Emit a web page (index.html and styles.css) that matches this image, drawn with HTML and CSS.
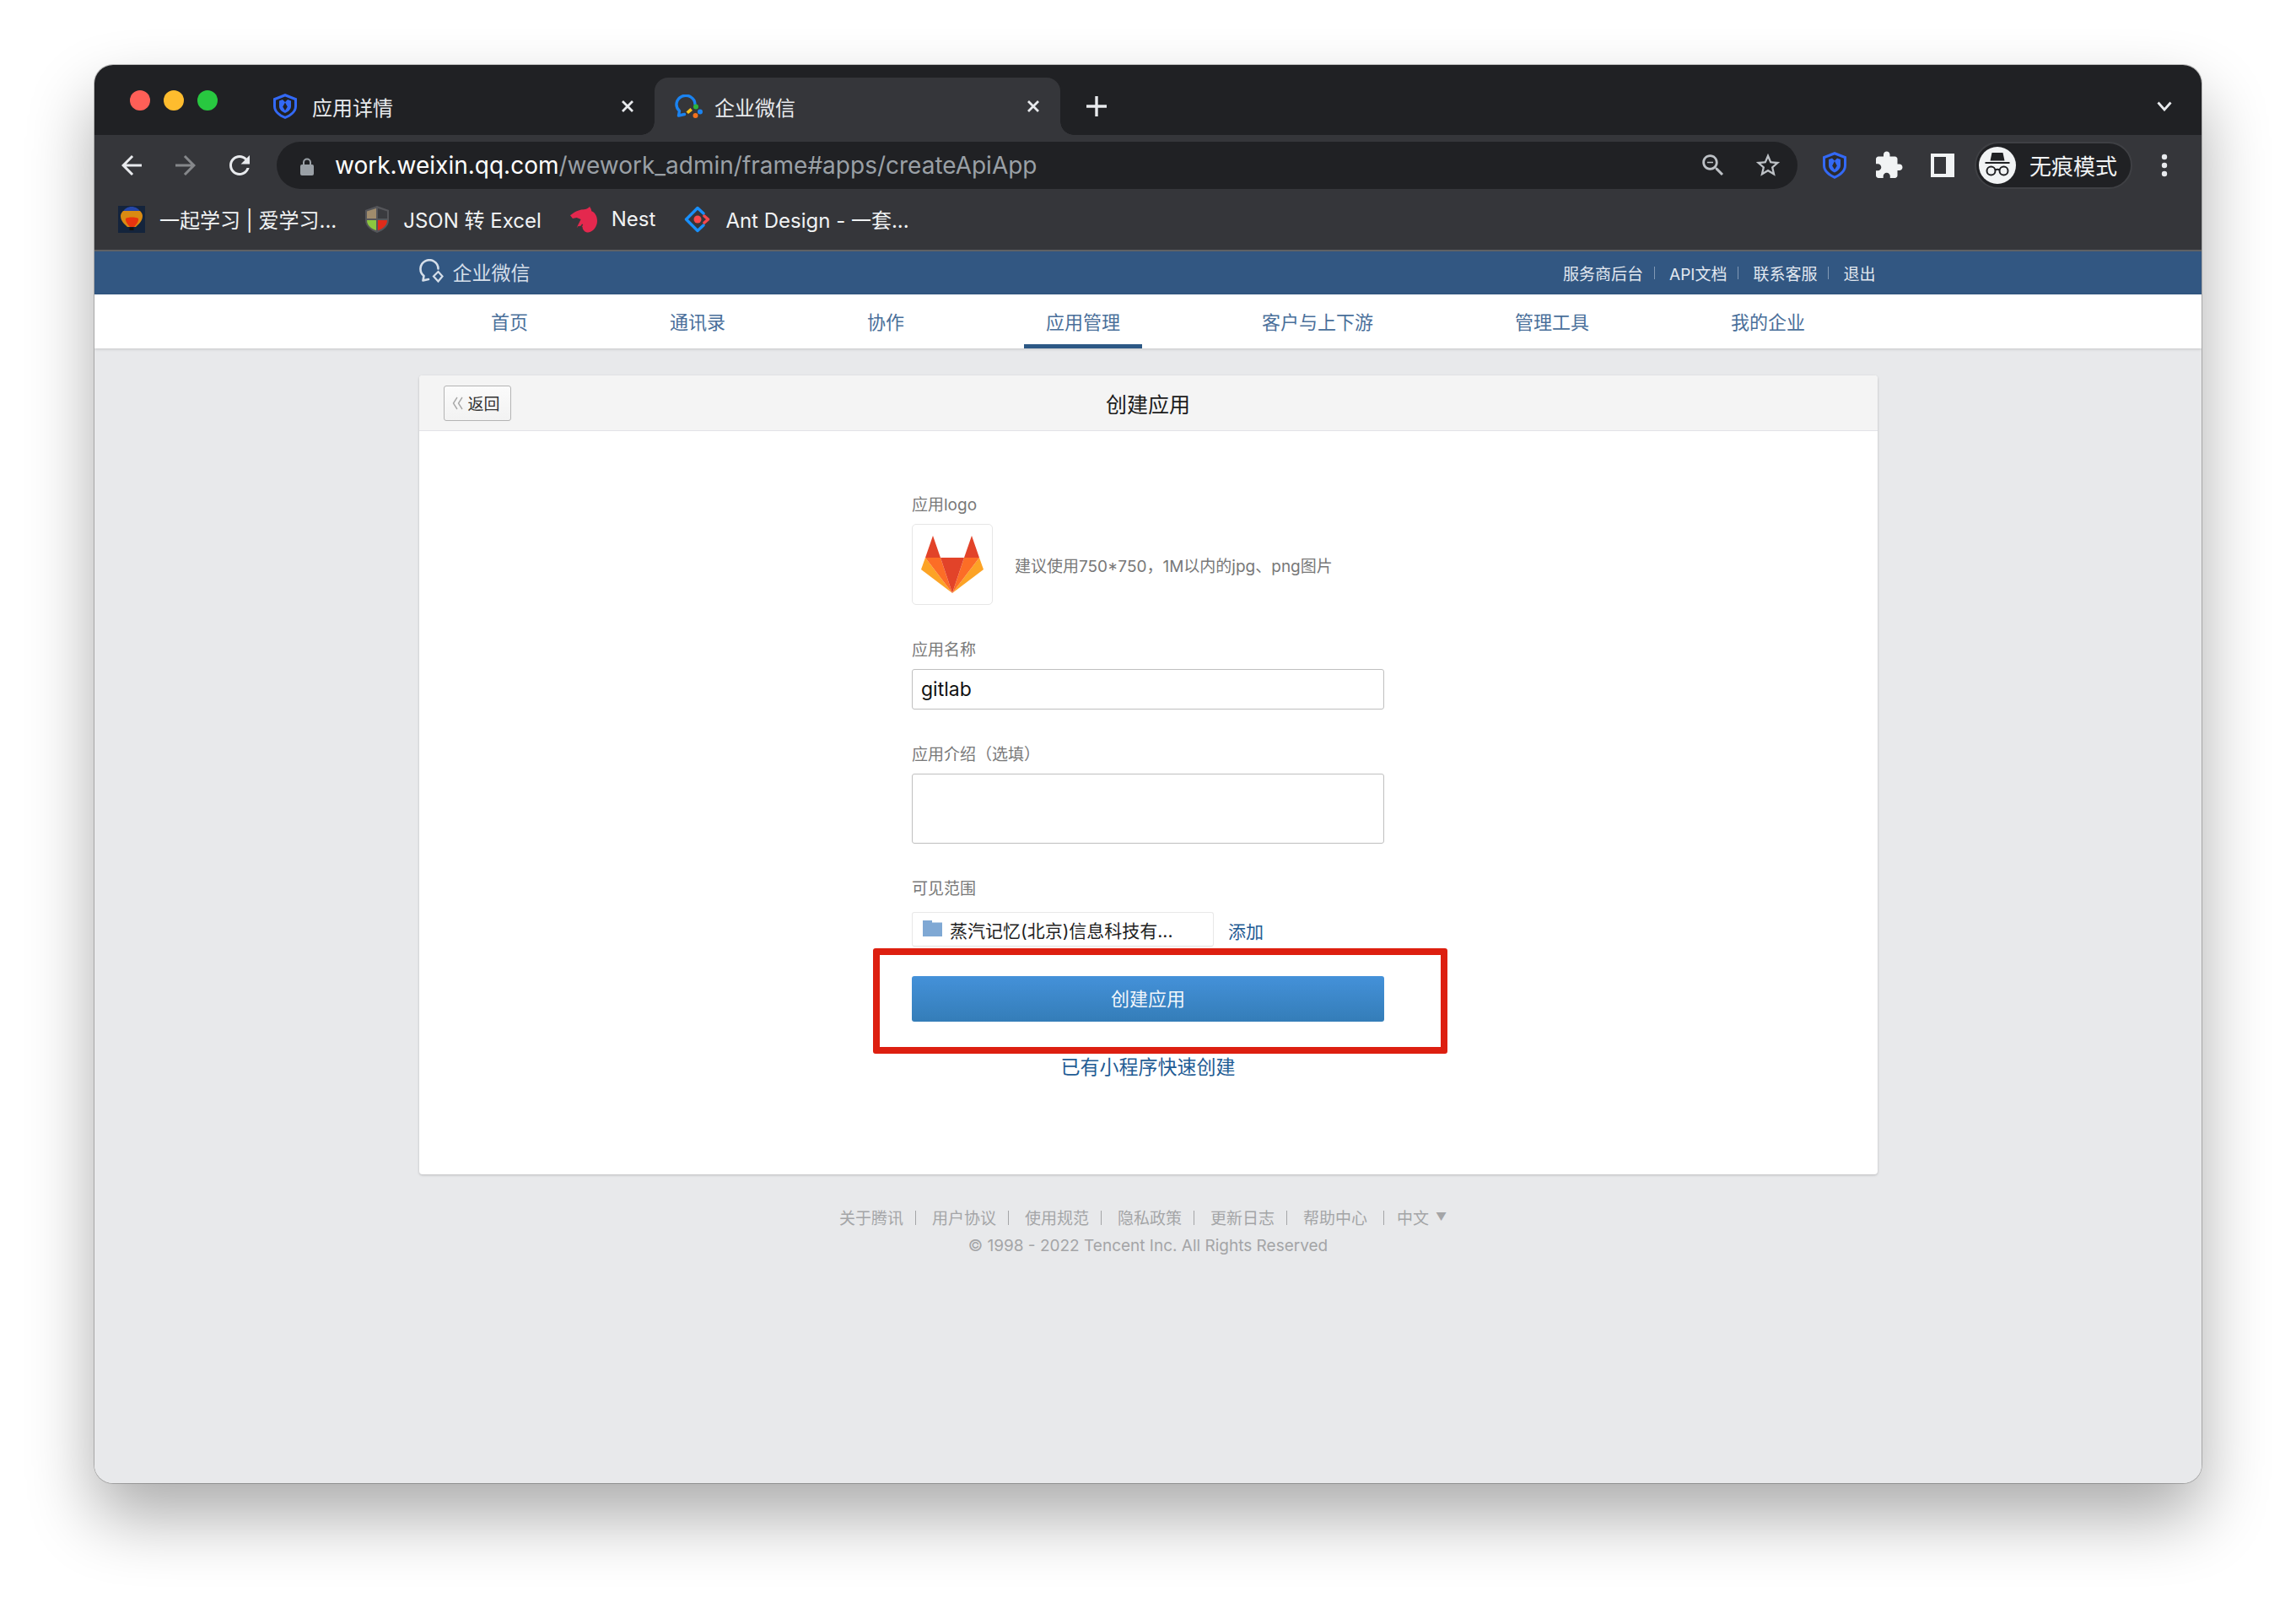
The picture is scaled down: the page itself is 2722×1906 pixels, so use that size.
FILE: index.html
```html
<!DOCTYPE html>
<html lang="zh-CN">
<head>
<meta charset="utf-8">
<title>企业微信</title>
<link rel="stylesheet" href="styles.css">
</head>
<body>
<div class="window">
  <div class="tabstrip">
    <div class="lights"><i class="light red"></i><i class="light amber"></i><i class="light green"></i></div>
    <div class="tab tab-first">
      <svg class="fav-shield" viewBox="0 0 28 30"><path fill="#3369f5" d="M14 0 28 5.5V15c0 7-6.500 12-14 15C6.500 27 0 22 0 15V5.500Z"/><path fill="#202124" d="M14 3.500 25 7.800V15c0 5.300-4.800 9.300-11 11.800C7.800 24.300 3 20.300 3 15V7.800Z"/><path fill="#3369f5" d="M7 8.500 11 7l3 3 3-3 4 1.500V15c0 3.500-3 6.300-7 8-4-1.700-7-4.500-7-8Z"/><path fill="#202124" d="m14 10.500 2.800 5L14 20l-2.800-4.500Z"/></svg>
      <span class="tab-title">应用详情</span>
      <svg class="tab-close" viewBox="0 0 16 16"><path d="m2 2 12 12M14 2 2 14"/></svg>
    </div>
    <div class="tab tab-active">
      <svg class="fav-wecom" viewBox="0 0 33 28"><path fill="none" stroke="#1b83f0" stroke-width="3.400" stroke-linejoin="round" stroke-linecap="round" d="M24 11.500A11 10.500 0 1 0 5.500 19.500L4.500 25 11.500 23.500"/><path fill="#fbc21a" d="m13.500 20.500 5-4.500 2.500 3-5 4Z"/><circle cx="25" cy="14.500" r="3" fill="#2cb53a"/><circle cx="30" cy="20.500" r="3" fill="#1b83f0"/><circle cx="24.500" cy="25" r="3" fill="#f4711c"/></svg>
      <span class="tab-title">企业微信</span>
      <svg class="tab-close" viewBox="0 0 16 16"><path d="m2 2 12 12M14 2 2 14"/></svg>
    </div>
    <svg class="new-tab" viewBox="0 0 26 26"><path d="M13 1v24M1 13h24"/></svg>
    <svg class="tabs-menu" viewBox="0 0 18 12"><path d="m1.500 1.500 7.500 8.500 7.500-8.500"/></svg>
  </div>

  <div class="toolbar">
    <svg class="tool-icon" viewBox="0 0 24 24"><path fill="#e8eaed" d="M20 11H7.830l5.590-5.590L12 4l-8 8 8 8 1.410-1.410L7.830 13H20v-2z"/></svg>
    <svg class="tool-icon" viewBox="0 0 24 24"><path fill="#85878a" d="M4 11h12.170l-5.590-5.590L12 4l8 8-8 8-1.410-1.410L16.170 13H4v-2z"/></svg>
    <svg class="tool-icon" viewBox="0 0 24 24"><path fill="#e8eaed" d="M17.650 6.350C16.200 4.900 14.210 4 12 4c-4.420 0-7.990 3.580-7.990 8s3.570 8 7.990 8c3.730 0 6.840-2.550 7.730-6h-2.080c-.82 2.330-3.040 4-5.650 4-3.310 0-6-2.690-6-6s2.690-6 6-6c1.660 0 3.140.69 4.220 1.780L13 11h7V4l-2.350 2.350z"/></svg>
    <div class="omnibox">
      <svg class="lock" viewBox="0 0 16 21"><path fill="#9aa0a6" d="M3 8V5.500a5 5 0 0 1 10 0V8h1a2 2 0 0 1 2 2v9a2 2 0 0 1-2 2H2a2 2 0 0 1-2-2v-9a2 2 0 0 1 2-2Zm2 0h6V5.500a3 3 0 0 0-6 0Z"/></svg>
      <div class="url"><span class="url-host">work.weixin.qq.com</span>/wework_admin/frame#apps/createApiApp</div>
      <svg class="omni-icon" viewBox="0 0 24 24"><path fill="#bdc1c6" d="M15.500 14h-.79l-.28-.27C15.410 12.590 16 11.110 16 9.500 16 5.910 13.090 3 9.500 3S3 5.910 3 9.500 5.910 16 9.500 16c1.610 0 3.090-.59 4.230-1.570l.27.28v.79l5 4.990L20.490 19l-4.990-5zm-6 0C7.010 14 5 11.990 5 9.500S7.010 5 9.500 5 14 7.010 14 9.500 11.990 14 9.500 14zM7 9h5v1H7z"/></svg>
      <svg class="omni-icon" viewBox="0 0 24 24"><path fill="#bdc1c6" d="m22 9.240-7.190-.62L12 2 9.190 8.630 2 9.240l5.460 4.730L5.820 21 12 17.270 18.180 21l-1.630-7.030L22 9.240zM12 15.400l-3.760 2.270 1-4.280-3.320-2.880 4.380-.38L12 6.100l1.710 4.040 4.380.38-3.320 2.880 1 4.280L12 15.400z"/></svg>
    </div>
    <div class="tool-box"><svg class="ext-shield" viewBox="0 0 28 32"><path fill="#3369f5" d="M14 0 28 5.500V16c0 7.500-6.500 12.500-14 16C6.500 28.500 0 23.500 0 16V5.500Z"/><path fill="#2a2b2f" d="M14 3.500 25 7.800V16c0 5.700-4.800 9.800-11 12.500C7.800 25.800 3 21.700 3 16V7.800Z"/><path fill="#3369f5" d="M7 9 11 7.500l3 3 3-3L21 9v7c0 3.700-3 6.800-7 8.500-4-1.700-7-4.800-7-8.500Z"/><path fill="#2a2b2f" d="m14 11 2.800 5.500L14 21l-2.800-4.500Z"/></svg></div>
    <svg class="tool-icon" viewBox="0 0 24 24"><path fill="#f1f3f4" d="M20.500 11H19V7c0-1.100-.9-2-2-2h-4V3.500C13 2.120 11.880 1 10.500 1S8 2.120 8 3.500V5H4c-1.100 0-1.990.9-1.990 2v3.800H3.500c1.490 0 2.700 1.210 2.700 2.700s-1.210 2.700-2.700 2.700H2V20c0 1.100.9 2 2 2h3.800v-1.500c0-1.490 1.210-2.700 2.700-2.700 1.490 0 2.700 1.210 2.700 2.700V22H17c1.100 0 2-.9 2-2v-4h1.500c1.380 0 2.500-1.120 2.500-2.500S21.880 11 20.500 11z"/></svg>
    <div class="tool-box"><svg class="panel" viewBox="0 0 28 28"><path fill="#f1f3f4" d="M0 0h28v28H0Z"/><path fill="#35363a" d="M4 4h14v20H4Z"/></svg></div>
    <div class="profile">
      <svg class="avatar" viewBox="0 0 44 44"><circle cx="22" cy="22" r="22" fill="#f1f3f4"/><path fill="#202124" d="M15.500 7h13l2 9.500h-17Z"/><path stroke="#202124" stroke-width="2" d="M7.500 19h29"/><g fill="none" stroke="#202124" stroke-width="2"><circle cx="14.500" cy="28.500" r="5"/><circle cx="29.500" cy="28.500" r="5"/><path d="M19 27.500c2-1 4-1 6 0"/></g></svg>
      <span class="profile-name">无痕模式</span>
    </div>
    <svg class="kebab" viewBox="0 0 8 28"><circle cx="4" cy="4" r="3.200"/><circle cx="4" cy="14" r="3.200"/><circle cx="4" cy="24" r="3.200"/></svg>
  </div>

  <div class="bookmarks">
    <div class="bookmark">
      <svg class="bm-icon" viewBox="0 0 32 32"><path fill="#14243c" d="M0 0h32v32H0Z"/><path fill="#2647a8" d="M5 10C6 3 12 1 16 1s10 2 11 9Z"/><path fill="#d98a12" d="M3 12c0-3 2-5 3-6h20c1 1 3 3 3 6 0 6-5 10-8 13h-10C8 22 3 18 3 12Z"/><path fill="#e8340f" d="M9 15c3-2 12-2 15 0 1 3-3 8-5 10h-5c-2-2-6-7-5-10Z"/><path fill="#1a1208" d="M13.500 25.500h5V29h-5Z"/></svg>
      <span>一起学习 | 爱学习...</span>
    </div>
    <div class="bookmark">
      <svg class="bm-icon-narrow" viewBox="0 0 28 32"><path fill="#55565a" d="M14 0 28 5v12c0 7-6 12-14 15C6 29 0 24 0 17V5Z"/><path fill="#a08c6c" d="M13 3 2 6.500V15h11Z"/><path fill="#3a3b3f" d="m15 3 11 3.500V15H15Z"/><path fill="#8cc63f" d="M2 17h11v12c-6-2-11-6-11-12Z"/><path fill="#e02b1a" d="M15 17h11c0 6-5 10-11 12Z"/></svg>
      <span>JSON 转 Excel</span>
    </div>
    <div class="bookmark">
      <svg class="bm-icon" viewBox="0 0 33 32"><path fill="#e4284e" d="M24 0c-1 2-3 3-7 4C12 4 8 6 5 7.500L0 11l3 4 5-1 5 2-3 6-2 4 4-2 3 1c0 4 3 7 7 7 6-1 11-7 11-14 0-6-3-11-7-12 0-2-1-4-2-5Z"/><path fill="none" stroke="#35363a" stroke-width="1.400" d="M9 25c3 1 5 0 6-3"/></svg>
      <span>Nest</span>
    </div>
    <div class="bookmark">
      <svg class="bm-icon" viewBox="0 0 32 32"><g fill="none" stroke-width="3.400" stroke-linecap="round" stroke-linejoin="round"><path stroke="#1890ff" d="M23 9 16 2.500 2.500 16 16 29.500 23 23"/><path stroke="#f5484d" d="m24 12 4.500 4-4.500 4"/></g><circle cx="16" cy="16" r="4.500" fill="#f5484d"/></svg>
      <span>Ant Design - 一套...</span>
    </div>
  </div>

  <div class="page">
    <div class="topbar">
      <div class="topbar-inner">
        <div class="brand">
          <svg class="brand-logo" viewBox="0 0 30 30"><path fill="none" stroke="#d5dee9" stroke-width="2.600" stroke-linejoin="round" stroke-linecap="round" d="M22.500 11.500A10.500 10.500 0 1 0 5.500 20L4.500 25.500 11 24"/><path fill="none" stroke="#d5dee9" stroke-width="2.200" d="m22.500 15 5 5.500-5 6-5.500-6Z"/></svg>
          <span>企业微信</span>
        </div>
        <div class="top-links">
          <a>服务商后台</a><i class="top-sep"></i><a>API文档</a><i class="top-sep"></i><a>联系客服</a><i class="top-sep"></i><a>退出</a>
        </div>
      </div>
    </div>
    <nav class="mainnav">
      <a class="nav-item">首页</a>
      <a class="nav-item">通讯录</a>
      <a class="nav-item">协作</a>
      <a class="nav-item nav-active">应用管理</a>
      <a class="nav-item">客户与上下游</a>
      <a class="nav-item">管理工具</a>
      <a class="nav-item">我的企业</a>
    </nav>

    <section class="card">
      <header class="card-head">
        <a class="back"><svg class="back-icon" viewBox="0 0 14 16"><path d="M6 1 1.500 8 6 15M12 1 7.500 8l4.500 7"/></svg>返回</a>
        <h1 class="card-title">创建应用</h1>
      </header>
      <form class="form">
        <div class="label label-first">应用logo</div>
        <div class="logo-row">
          <div class="logo-box">
            <svg class="tanuki" viewBox="0 0 74 68"><path fill="#fca326" d="M0 40 5 26 37 68Z"/><path fill="#fca326" d="M74 40 69 26 37 68Z"/><path fill="#fc6d26" d="M5 26h18l14 42Z"/><path fill="#fc6d26" d="M69 26H51L37 68Z"/><path fill="#e24329" d="M23 26h28L37 68Z"/><path fill="#e24329" d="M14 0 5 26h18Z"/><path fill="#e24329" d="M60 0 51 26h18Z"/></svg>
          </div>
          <span class="hint">建议使用750*750，1M以内的jpg、png图片</span>
        </div>
        <div class="label label-gap">应用名称</div>
        <div class="input">gitlab</div>
        <div class="label label-gap">应用介绍（选填）</div>
        <div class="textarea"></div>
        <div class="label label-gap">可见范围</div>
        <div class="scope-row">
          <div class="chip">
            <svg class="folder" viewBox="0 0 23 19"><path fill="#7fa8d4" d="M0 0h11v2.500h12V19H0Z"/></svg>
            <span>蒸汽记忆(北京)信息科技有...</span>
          </div>
          <a class="add">添加</a>
        </div>
        <div class="cta">
          <div class="submit">创建应用</div>
          <div class="highlight"></div>
        </div>
        <a class="quick">已有小程序快速创建</a>
      </form>
    </section>

    <footer class="footer">
      <div class="foot-links">
        <a>关于腾讯</a><i class="foot-sep"></i><a>用户协议</a><i class="foot-sep"></i><a>使用规范</a><i class="foot-sep"></i><a>隐私政策</a><i class="foot-sep"></i><a>更新日志</a><i class="foot-sep"></i><a>帮助中心</a><i class="foot-sep foot-sep-last"></i><a>中文</a><b class="caret">▼</b>
      </div>
      <div class="copyright">© 1998 - 2022 Tencent Inc. All Rights Reserved</div>
    </footer>
  </div>
</div>
</body>
</html>
```

FILE: styles.css
```css
* { box-sizing: border-box; }
html, body { margin: 0; height: 100%; }
body {
  background: #fff;
  overflow: hidden;
  font-family: Inter, "Noto Sans CJK SC", sans-serif;
  padding: 77px 0 0 112px;
}
a { color: inherit; text-decoration: none; }
svg { display: block; flex: none; }

.window {
  width: 2498px;
  height: 1681px;
  border-radius: 22px;
  overflow: hidden;
  display: flex;
  flex-direction: column;
  box-shadow: 0 40px 80px rgba(0, 0, 0, .33), 0 0 0 1px rgba(0, 0, 0, .22);
}

/* tab strip */
.tabstrip {
  height: 83px;
  flex: none;
  background: #202124;
  display: flex;
  align-items: flex-end;
  padding-left: 42px;
  color: #e8eaed;
}
.lights { display: flex; gap: 16px; align-self: flex-start; margin-top: 30px; }
.light { width: 24px; height: 24px; border-radius: 50%; }
.red { background: #ff5f57; }
.amber { background: #febc2e; }
.green { background: #28c840; }
.tab {
  height: 68px;
  display: flex;
  align-items: center;
  font-size: 24px;
  padding-right: 24px;
  position: relative;
}
.tab-first { width: 481px; margin-left: 37px; padding-left: 29px; }
.tab-active {
  width: 481px;
  padding-left: 24px;
  background: #35363a;
  border-radius: 16px 16px 0 0;
}
.tab-active::before,
.tab-active::after {
  content: "";
  position: absolute;
  bottom: 0;
  width: 16px;
  height: 16px;
}
.tab-active::before { left: -16px; background: radial-gradient(circle at 0 0, #202124 15.500px, #35363a 16px); }
.tab-active::after { right: -16px; background: radial-gradient(circle at 100% 0, #202124 15.500px, #35363a 16px); }
.fav-shield { width: 28px; height: 30px; margin-right: 18px; }
.fav-wecom { width: 33px; height: 28px; margin-right: 14px; }
.tab-title { white-space: nowrap; }
.tab-close { width: 16px; height: 16px; margin-left: auto; fill: none; stroke: #e8eaed; stroke-width: 2.800; }
.new-tab { width: 26px; height: 26px; margin: 0 0 21px 30px; fill: none; stroke: #e8eaed; stroke-width: 3.400; }
.tabs-menu { width: 18px; height: 12px; margin: 0 35px 28px auto; fill: none; stroke: #e8eaed; stroke-width: 2.800; }

/* toolbar */
.toolbar {
  height: 71px;
  flex: none;
  background: #35363a;
  display: flex;
  align-items: center;
  gap: 24px;
  padding-left: 24px;
}
.tool-icon { width: 40px; height: 40px; padding: 2px; }
.tool-box { width: 40px; height: 40px; display: flex; align-items: center; justify-content: center; }
.omnibox {
  width: 1803px;
  height: 56px;
  border-radius: 28px;
  background: #202124;
  display: flex;
  align-items: center;
  padding: 0 18px 0 28px;
  flex: none;
}
.lock { width: 16px; height: 21px; margin: 3px 25px 0 0; }
.url { font-size: 28px; color: #9aa0a6; flex: 1; white-space: nowrap; }
.url-host { color: #fff; }
.omni-icon { width: 34px; height: 34px; margin-left: 31px; }
.ext-shield { width: 28px; height: 32px; }
.panel { width: 28px; height: 28px; }
.profile {
  width: 187px;
  height: 56px;
  margin-left: -6px;
  flex: none;
  border: 2px solid #3f4044;
  border-radius: 28px;
  background: #202124;
  display: flex;
  align-items: center;
  padding-left: 3px;
  gap: 16px;
  color: #f1f3f4;
}
.avatar { width: 44px; height: 44px; }
.profile-name { font-size: 26px; white-space: nowrap; }
.kebab { width: 8px; height: 28px; margin-left: 10px; fill: #e8eaed; }

/* bookmarks */
.bookmarks {
  height: 67px;
  flex: none;
  background: #35363a;
  border-bottom: 2px solid #5f6164;
  padding: 0 0 8px 28px;
  display: flex;
  align-items: center;
  gap: 34px;
  color: #f1f3f4;
  font-size: 24px;
  white-space: nowrap;
}
.bookmark { display: flex; align-items: center; gap: 17px; }
.bm-icon { width: 32px; height: 32px; }
.bm-icon-narrow { width: 28px; height: 32px; }

/* page */
.page {
  flex: 1;
  background: #e8e9eb;
  display: flex;
  flex-direction: column;
  align-items: center;
}
.topbar { width: 100%; height: 51px; flex: none; background: #325782; }
.topbar-inner {
  width: 1729px;
  height: 100%;
  margin: 0 auto;
  display: flex;
  align-items: center;
  justify-content: space-between;
}
.brand { display: flex; align-items: center; gap: 10px; font-size: 23px; color: #d5dee9; margin-top: -3px; }
.brand-logo { width: 30px; height: 30px; }
.top-links { display: flex; align-items: center; font-size: 19px; color: #e2e8f0; padding-right: 2px; }
.top-sep { width: 1px; height: 15px; background: #8199b5; margin: 0 17px 0 13px; }

.mainnav {
  width: 100%;
  height: 64px;
  flex: none;
  background: #fff;
  display: flex;
  justify-content: center;
  gap: 116px;
  box-shadow: 0 1px 3px rgba(0, 0, 0, .16);
  font-size: 22px;
  color: #4a6f9a;
}
.nav-item {
  padding: 0 26px;
  height: 64px;
  line-height: 52px;
  padding-top: 7px;
  border-bottom: 5px solid transparent;
}
.nav-active { border-bottom-color: #2c5885; }

/* card */
.card {
  width: 1729px;
  height: 947px;
  flex: none;
  margin-top: 32px;
  background: #fff;
  border-radius: 4px;
  box-shadow: 0 1px 3px rgba(0, 0, 0, .2);
}
.card-head {
  height: 66px;
  background: #f4f4f4;
  border-bottom: 1px solid #e2e2e8;
  border-radius: 4px 4px 0 0;
  padding: 0 29px;
  display: grid;
  grid-template-columns: 1fr auto 1fr;
  align-items: center;
}
.back {
  width: 80px;
  height: 42px;
  border: 1px solid #b4b4b4;
  border-radius: 3px;
  background: linear-gradient(#fbfbfb, #f2f2f2);
  display: flex;
  align-items: center;
  gap: 5px;
  padding-left: 9px;
  font-size: 19px;
  color: #333;
}
.back-icon { width: 14px; height: 16px; fill: none; stroke: #a8a8a8; stroke-width: 1.400; }
.card-title { grid-column: 2; margin: 0; font-size: 25px; font-weight: 400; color: #1c1c1c; }

.form { width: 560px; margin: 0 auto; padding-top: 74px; }
.label { height: 28px; line-height: 28px; font-size: 19px; color: #787878; margin-bottom: 8px; }
.label-gap { margin-top: 40px; }
.logo-row { display: flex; align-items: center; gap: 26px; }
.logo-box {
  width: 96px;
  height: 96px;
  border: 1px solid #e6e6e6;
  border-radius: 5px;
  display: flex;
  align-items: center;
  justify-content: center;
}
.tanuki { width: 74px; height: 68px; margin-top: 0; }
.hint { font-size: 19px; color: #787878; white-space: nowrap; }
.input {
  height: 48px;
  border: 1px solid #bfbfbf;
  border-radius: 3px;
  padding-left: 10px;
  font-size: 23px;
  line-height: 46px;
  color: #111;
}
.textarea { height: 83px; border: 1px solid #bfbfbf; border-radius: 3px; }
.scope-row { display: flex; margin-top: 13px; }
.chip {
  width: 358px;
  height: 41px;
  border: 1px solid #e8e8e8;
  border-bottom-color: #e0e0e0;
  border-radius: 3px;
  display: flex;
  align-items: center;
  gap: 9px;
  padding-left: 12px;
  font-size: 21px;
  color: #222;
  white-space: nowrap;
}
.folder { width: 23px; height: 19px; margin-top: -3px; }
.add { font-size: 21px; color: #1f5c94; margin-left: 17px; line-height: 47px; height: 41px; }
.cta { position: relative; margin-top: 35px; }
.submit {
  height: 54px;
  border-radius: 3px;
  background: linear-gradient(#4491d9, #347db8);
  color: #f1f6fb;
  font-size: 22px;
  line-height: 54px;
  text-align: center;
}
.highlight {
  position: absolute;
  left: -46px;
  top: -33px;
  width: 681px;
  height: 125px;
  border: 8px solid #dd1f10;
  border-radius: 3px;
}
.quick {
  display: block;
  margin-top: 40px;
  height: 28px;
  line-height: 28px;
  font-size: 23px;
  color: #1f5c94;
  text-align: center;
}

/* footer */
.footer { margin-top: 36px; color: #a4a5a7; font-size: 19px; text-align: center; }
.foot-links { display: flex; align-items: center; justify-content: center; height: 28px; padding-right: 12px; }
.foot-sep { width: 1px; height: 17px; background: #a4a5a7; margin: 2px 19px 0 14px; }
.foot-sep-last { margin: 2px 15px 0 19px; }
.caret { font-size: 13px; font-weight: 400; margin-left: 8px; }
.copyright { margin-top: 7px; line-height: 28px; }
```
